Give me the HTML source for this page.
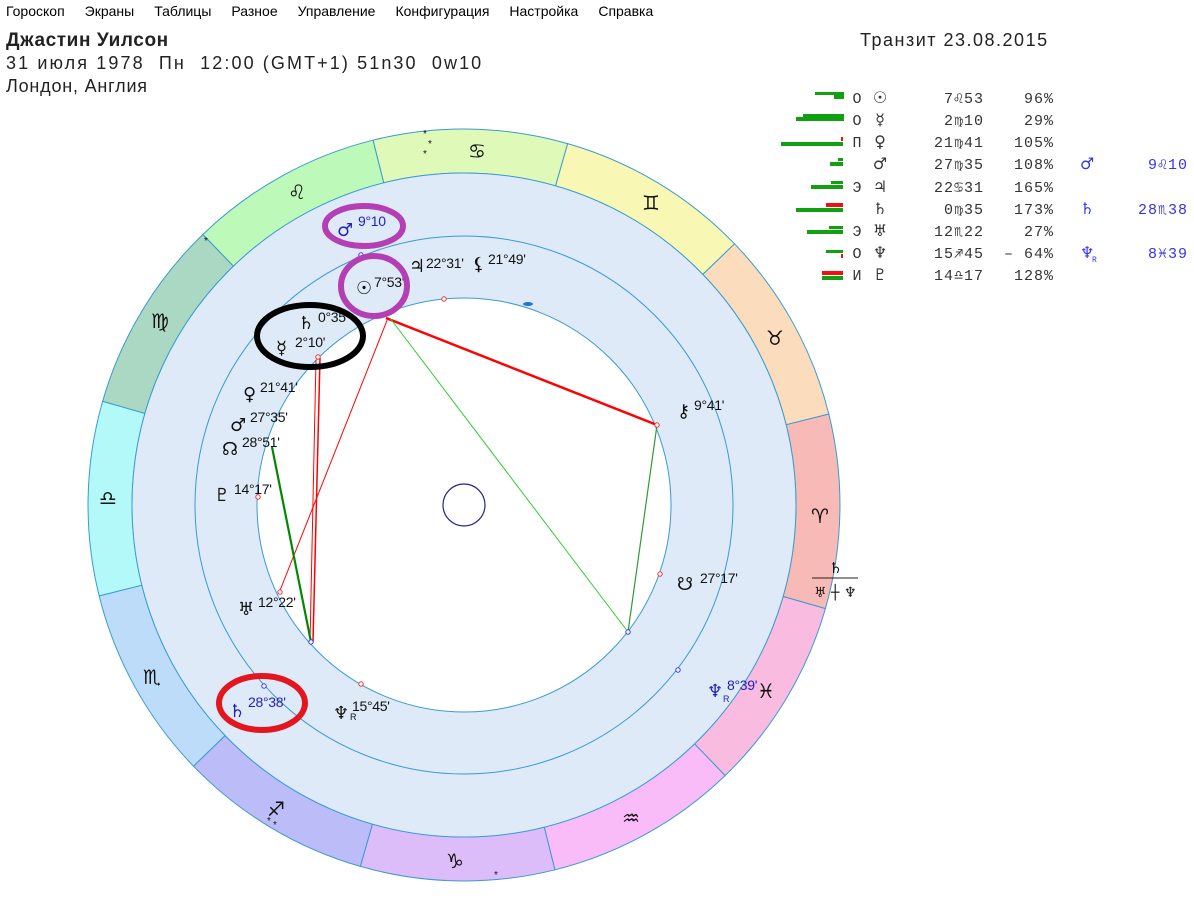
<!DOCTYPE html>
<html><head><meta charset="utf-8"><style>
body{margin:0;width:1194px;height:900px;background:#fff;overflow:hidden;font-family:"Liberation Sans","DejaVu Sans",sans-serif;position:relative}
.menu{position:absolute;top:3px;left:6px;font-size:14px;color:#000}
.menu span{margin-right:20px}
.t{position:absolute;color:#222}
svg{position:absolute;left:0;top:0}
.g{font-family:"DejaVu Sans",sans-serif}
</style></head><body>
<div class="menu"><span>Гороскоп</span><span>Экраны</span><span>Таблицы</span><span>Разное</span><span>Управление</span><span>Конфигурация</span><span>Настройка</span><span>Справка</span></div>
<div class="t" style="left:6px;top:30px;font-size:19px;font-weight:bold;letter-spacing:0.6px">Джастин Уилсон</div>
<div class="t" style="left:6px;top:53px;font-size:18px;letter-spacing:2.1px">31 июля 1978&nbsp; Пн&nbsp; 12:00 (GMT+1) 51n30&nbsp; 0w10</div>
<div class="t" style="left:6px;top:76px;font-size:18px;letter-spacing:0.8px">Лондон, Англия</div>
<div class="t" style="left:860px;top:30px;font-size:18px;letter-spacing:1.5px">Транзит 23.08.2015</div>

<svg width="1194" height="900" id="s" font-family="Liberation Sans, DejaVu Sans, sans-serif">
<g id="zod"></g>
<circle cx="464" cy="505" r="332" fill="#deeaf7" stroke="#3a9bd0" stroke-width="1"/>
<circle cx="464" cy="505" r="269" fill="none" stroke="#3a9bd0" stroke-width="1"/>
<circle cx="464" cy="505" r="207" fill="#fff" stroke="#3a9bd0" stroke-width="1"/>
<circle cx="464" cy="505" r="21" fill="none" stroke="#222288" stroke-width="1.2"/>
<g fill="none">
<line x1="386" y1="318" x2="657" y2="425" stroke="#f00" stroke-width="2.5"/>
<line x1="390" y1="318" x2="628" y2="632" stroke="#3c3" stroke-width="1"/>
<line x1="657" y1="425" x2="628" y2="632" stroke="#393" stroke-width="1.2"/>
<line x1="316" y1="360" x2="310" y2="642" stroke="#f00" stroke-width="1"/>
<line x1="320" y1="358" x2="313" y2="642" stroke="#f00" stroke-width="1.5"/>
<line x1="388" y1="318" x2="279" y2="593" stroke="#f00" stroke-width="1"/>
<line x1="272" y1="447" x2="311" y2="642" stroke="#080" stroke-width="2.2"/>
</g>
<g fill="#fff" stroke="#e33" stroke-width="1">
<circle cx="444" cy="299" r="2.2"/><circle cx="318" cy="357" r="2.2"/><circle cx="258" cy="497" r="2.2"/><circle cx="280" cy="592" r="2.2"/><circle cx="361" cy="684" r="2.2"/><circle cx="660" cy="574" r="2.2"/><circle cx="657" cy="425" r="2.2"/>
</g>
<g fill="#fff" stroke="#33f" stroke-width="1">
<circle cx="311" cy="642" r="2.2"/><circle cx="628" cy="632" r="2.2"/><circle cx="678" cy="670" r="2.2"/><circle cx="264" cy="686" r="2.2"/><circle cx="361" cy="255" r="2.2"/>
</g>
<ellipse cx="528" cy="304" rx="5" ry="2" fill="#2277cc"/>
<g class="g" font-size="20" fill="#111" text-anchor="middle">
<text x="820" y="523">♈</text><text x="775" y="345">♉</text><text x="651" y="210">♊</text><text x="477" y="158">♋</text>
<text x="297" y="199">♌</text><text x="160" y="328">♍</text><text x="108" y="505">♎</text><text x="152" y="684">♏</text>
<text x="276" y="816">♐</text><text x="455" y="868">♑</text><text x="631" y="825">♒</text><text x="766" y="698">♓</text>
</g>
<g font-size="10" fill="#111"><text x="423" y="137">*</text><text x="428" y="147">*</text><text x="423" y="157">*</text><text x="204" y="244">*</text><text x="267" y="824">*</text><text x="273" y="828">*</text><text x="494" y="878">*</text></g>
<g font-size="14" fill="#111" letter-spacing="-0.3">
<g class="g" font-size="18">
<text x="356" y="294">☉</text><text x="409" y="272">♃</text><text x="472" y="270">⚸</text>
<text x="298" y="329">♄</text><text x="276" y="354">☿</text><text x="243" y="400">♀</text><text x="230" y="431">♂</text>
<text x="222" y="455">☊</text><text x="214" y="501">♇</text><text x="238" y="615">♅</text><text x="333" y="719">♆</text>
<text x="677" y="417">⚷</text><text x="677" y="590">☋</text>
</g>
<text x="374" y="287">7°53'</text><text x="426" y="268">22°31'</text><text x="488" y="264">21°49'</text>
<text x="318" y="322">0°35'</text><text x="295" y="347">2°10'</text><text x="260" y="392">21°41'</text>
<text x="250" y="422">27°35'</text><text x="242" y="447">28°51'</text><text x="234" y="494">14°17'</text>
<text x="258" y="607">12°22'</text><text x="350" y="720" font-size="9">R</text><text x="352" y="711">15°45'</text>
<text x="694" y="410">9°41'</text><text x="700" y="583">27°17'</text>
</g>
<g font-size="14" fill="#2222bb" letter-spacing="-0.3">
<g class="g" font-size="18"><text x="337" y="236">♂</text><text x="229" y="717">♄</text><text x="707" y="697">♆</text></g>
<text x="358" y="226">9°10</text><text x="248" y="707">28°38'</text>
<text x="723" y="702" font-size="9">R</text><text x="727" y="690">8°39'</text>
</g>
<g fill="#111" class="g"><text x="829" y="573" font-size="15">♄</text><line x1="812" y1="578" x2="858" y2="578" stroke="#222"/><text x="814" y="597" font-size="14">♅ ┼ ♆</text></g>
<ellipse cx="364" cy="226" rx="39" ry="20" fill="none" stroke="#b43fb4" stroke-width="6"/>
<ellipse cx="374" cy="286" rx="33" ry="30" fill="none" stroke="#b43fb4" stroke-width="6"/>
<ellipse cx="310" cy="336" rx="53" ry="31" fill="none" stroke="#000" stroke-width="6"/>
<ellipse cx="262" cy="703" rx="43" ry="27" fill="none" stroke="#e3161e" stroke-width="6"/>
<g fill="#11a011">
<rect x="815" y="92" width="29" height="3"/><rect x="834" y="95" width="10" height="4"/>
<rect x="803" y="114" width="41" height="3"/><rect x="796" y="117" width="48" height="4"/>
<rect x="781" y="142" width="62" height="4"/>
<rect x="838" y="158" width="5" height="3"/><rect x="830" y="162" width="13" height="4"/>
<rect x="831" y="181" width="12" height="3"/><rect x="811" y="185" width="32" height="4"/>
<rect x="796" y="208" width="47" height="4"/>
<rect x="829" y="226" width="14" height="3"/><rect x="807" y="230" width="36" height="4"/>
<rect x="826" y="250" width="17" height="3"/>
<rect x="822" y="276" width="21" height="4"/>
</g>
<g fill="#f01010"><rect x="841" y="137" width="2" height="4"/><rect x="826" y="203" width="17" height="4"/><rect x="841" y="254" width="2" height="4"/><rect x="822" y="271" width="21" height="4"/></g>
<g font-family="Liberation Mono, DejaVu Sans Mono, monospace" font-size="15" fill="#333">
<g text-anchor="middle">
<text x="857" y="103">О</text><text x="857" y="125">О</text><text x="857" y="147">П</text><text x="857" y="192">Э</text><text x="857" y="236">Э</text><text x="857" y="258">О</text><text x="857" y="280">И</text>
<g class="g" font-size="16">
<text x="880" y="103">☉</text><text x="880" y="125">☿</text><text x="880" y="147">♀</text><text x="880" y="169">♂</text><text x="880" y="192">♃</text><text x="880" y="214">♄</text><text x="880" y="236">♅</text><text x="880" y="258">♆</text><text x="880" y="280">♇</text>
</g>
</g>
<g text-anchor="end" letter-spacing="1">
<text x="984" y="103">7♌53</text><text x="984" y="125">2♍10</text><text x="984" y="147">21♍41</text><text x="984" y="169">27♍35</text><text x="984" y="192">22♋31</text><text x="984" y="214">0♍35</text><text x="984" y="236">12♏22</text><text x="984" y="258">15♐45</text><text x="984" y="280">14♎17</text>
<text x="1054" y="103">96%</text><text x="1054" y="125">29%</text><text x="1054" y="147">105%</text><text x="1054" y="169">108%</text><text x="1054" y="192">165%</text><text x="1054" y="214">173%</text><text x="1054" y="236">27%</text><text x="1054" y="258">– 64%</text><text x="1054" y="280">128%</text>
</g>
<g fill="#3333ee"><g class="g" font-size="16"><text x="1080" y="169">♂</text><text x="1080" y="214">♄</text><text x="1080" y="258">♆</text></g><text x="1092" y="262" font-size="8">R</text>
<g text-anchor="end" letter-spacing="1"><text x="1188" y="169">9♌10</text><text x="1188" y="214">28♏38</text><text x="1188" y="258">8♓39</text></g></g>
</g>
</svg>
<script>
(function(){
var cx=464,cy=505,R1=376,R2=332;
var cols=["#f8bab6","#fbdcbc","#f8f8b4","#def9b8","#bdf9b8","#aad8c2","#b4f9f9","#bcdcf9","#bcbcf9","#dcbcf9","#f9bcf9","#f9bce0"];
var g=document.getElementById("zod"),s="";
function p(r,a){a=a*Math.PI/180;return (cx+r*Math.cos(a)).toFixed(1)+","+(cy-r*Math.sin(a)).toFixed(1);}
for(var i=0;i<12;i++){var a1=-16+30*i,a2=a1+30;
s+='<path d="M'+p(R1,a1)+' A'+R1+','+R1+' 0 0 0 '+p(R1,a2)+' L'+p(R2,a2)+' A'+R2+','+R2+' 0 0 1 '+p(R2,a1)+' Z" fill="'+cols[i]+'" stroke="#3a9bd0" stroke-width="1"/>';}
g.innerHTML=s;
})();
</script>
</body></html>
